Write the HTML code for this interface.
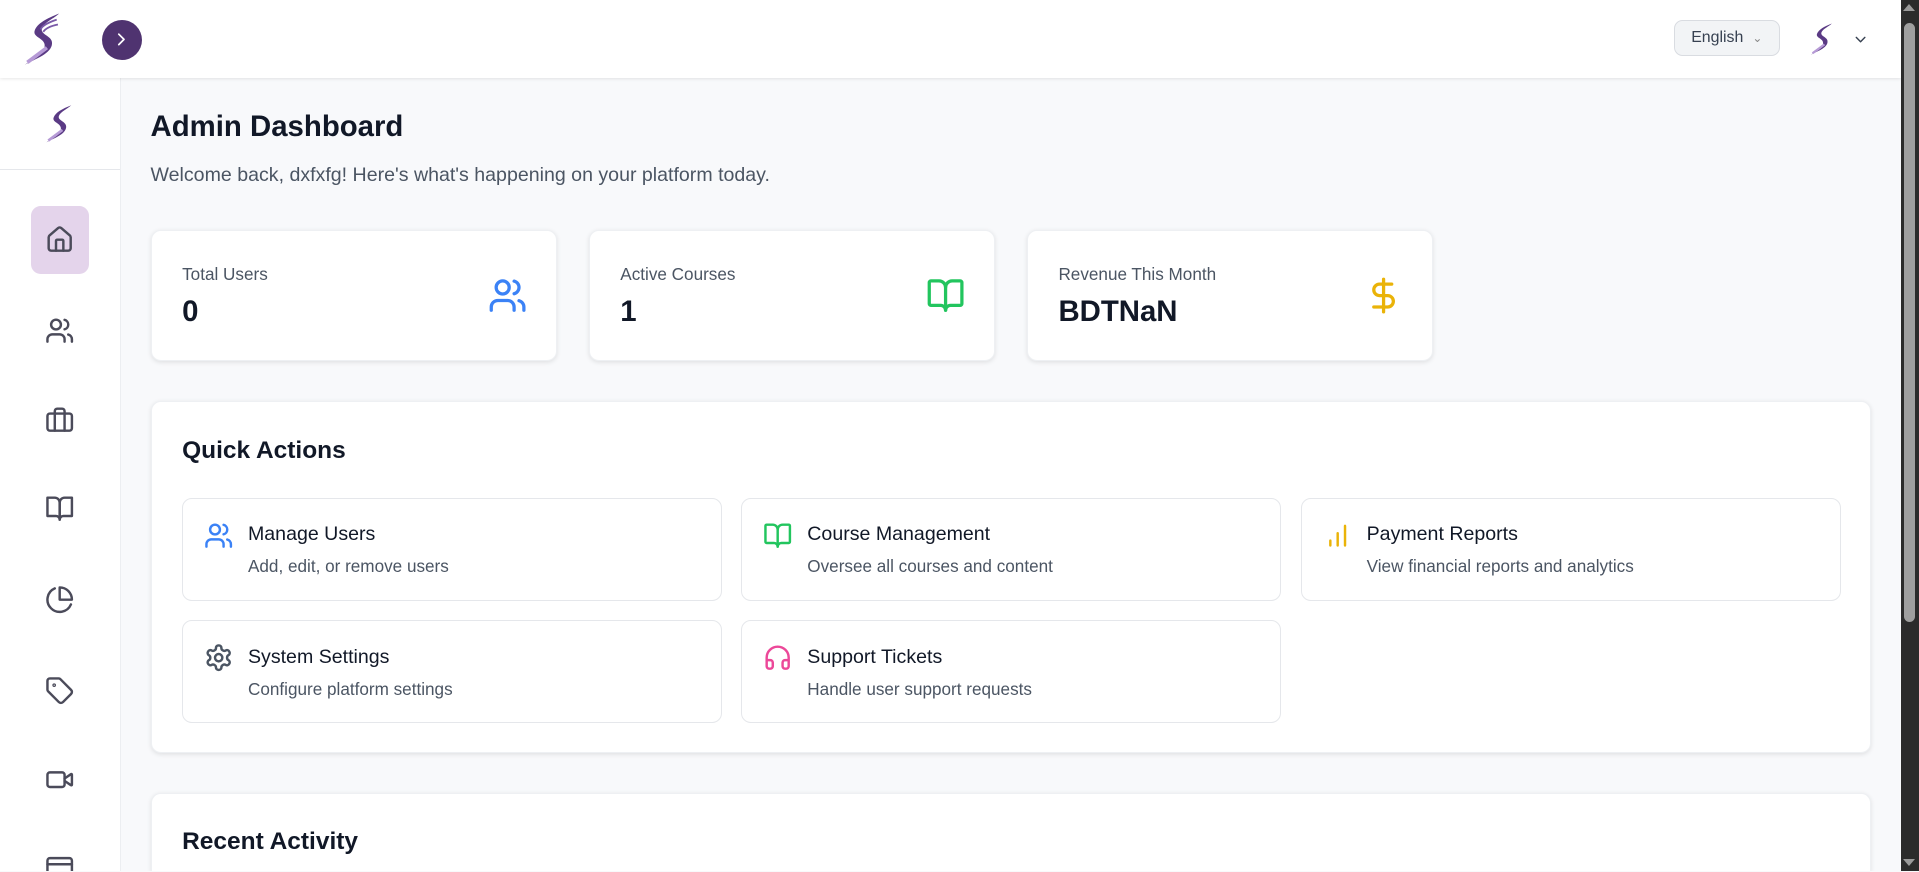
<!DOCTYPE html>
<html><head><meta charset="utf-8"><style>
html,body{margin:0;padding:0;width:1919px;height:872px;overflow:hidden;background:#f8f9fb;font-family:"Liberation Sans",sans-serif}
#w{zoom:1.2239;width:1568px;height:712px;position:relative;overflow:hidden;background:#f8f9fb}
.abs{position:absolute}
svg.i{fill:none;stroke-width:2;stroke-linecap:round;stroke-linejoin:round}
.hdr{left:0;top:0;width:1553px;height:64px;background:#fff;box-shadow:0 1px 3px rgba(0,0,0,.12);z-index:3}
.side{left:0;top:64px;width:98px;height:648px;background:#fff;border-right:1px solid #eceef1;z-index:2;overflow:hidden}
.card{background:#fff;border-radius:8px;box-shadow:0 1px 4px rgba(0,0,0,.1);border:1px solid #eef0f3;box-sizing:border-box}
.stat .l{position:absolute;left:25px;top:27px;font-size:14px;color:#4b5563}
.stat .v{position:absolute;left:25px;top:52px;font-size:24px;font-weight:bold;color:#111827}
.stat svg{position:absolute;left:275px;top:37px}
.qa{position:absolute;width:441px;height:84px;border:1px solid #e5e7eb;border-radius:8px;box-sizing:border-box;background:#fff}
.qa svg{position:absolute;left:17px;top:18px}
.qa .t{position:absolute;left:53px;top:20px;font-size:16px;color:#111827}
.qa .d{position:absolute;left:53px;top:47px;font-size:14px;color:#4b5563}
.nav{position:absolute;left:37px;stroke:#4b4b5a}
</style></head><body><div id="w">
<div class="abs hdr">
 <svg class="abs" style="left:16px;top:9px" width="36" height="46" viewBox="0 0 36 46"><path d="M32 2C22 6 14 10 12 16C10 22 22 22 20 30C18 38 8 40 4 44C10 40 24 36 26 28C28 20 16 20 18 14C20 9 28 6 32 2Z" fill="#5a3a84"/><path d="M30 7C24 9 18 12 17 15M31 11C26 12 21 14 19 17" stroke="#7a5aa8" stroke-width="1.5" fill="none"/><path d="M6 42L22 30" stroke="#b69ad6" stroke-width="3"/></svg>
 <div class="abs" style="left:83px;top:16px;width:33px;height:33px;border-radius:50%;background:#4f3370"></div>
 <svg class="abs i" style="left:91px;top:24px" width="17" height="17" viewBox="0 0 24 24" stroke="#fff"><path d="M9 6l6 6-6 6"/></svg>
 <div class="abs" style="left:1368px;top:16px;width:86px;height:30px;border:1px solid #d9dce1;border-radius:7px;background:#f2f4f6;box-sizing:border-box;font-size:13px;color:#374151;line-height:28px;padding-left:13px">English<span style="position:absolute;left:63px;top:0;color:#888;font-size:10px">&#8964;</span></div>
 <svg class="abs" style="left:1477px;top:18px" width="22" height="28" viewBox="0 0 36 46"><path d="M32 2C22 6 14 10 12 16C10 22 22 22 20 30C18 38 8 40 4 44C10 40 24 36 26 28C28 20 16 20 18 14C20 9 28 6 32 2Z" fill="#5a3a84"/><path d="M6 42L22 30" stroke="#b69ad6" stroke-width="3"/></svg>
 <svg class="abs i" style="left:1513px;top:25px" width="14" height="14" viewBox="0 0 24 24" stroke="#374151"><path d="M6 9l6 6 6-6"/></svg>
</div>
<div class="abs side">
 <svg class="abs" style="left:35px;top:20px" width="26" height="34" viewBox="0 0 36 46"><path d="M32 2C22 6 14 10 12 16C10 22 22 22 20 30C18 38 8 40 4 44C10 40 24 36 26 28C28 20 16 20 18 14C20 9 28 6 32 2Z" fill="#5a3a84"/><path d="M6 42L22 30" stroke="#b69ad6" stroke-width="3"/></svg>
 <div class="abs" style="left:0;top:74px;width:98px;height:1px;background:#e5e7eb"></div>
 <div class="abs" style="left:25px;top:104px;width:48px;height:56px;border-radius:8px;background:#e4d4eb"></div>
 <svg class="nav i" style="top:120px" width="24" height="24" viewBox="0 0 24 24" stroke="#4a3366"><path d="M15 21v-8a1 1 0 0 0-1-1h-4a1 1 0 0 0-1 1v8"/><path d="M3 10a2 2 0 0 1 .7-1.5l7-6a2 2 0 0 1 2.6 0l7 6A2 2 0 0 1 21 10v9a2 2 0 0 1-2 2H5a2 2 0 0 1-2-2z"/></svg>
 <svg class="nav i" style="top:194px" width="24" height="24" viewBox="0 0 24 24"><path d="M16 21v-2a4 4 0 0 0-4-4H6a4 4 0 0 0-4 4v2"/><circle cx="9" cy="7" r="4"/><path d="M22 21v-2a4 4 0 0 0-3-3.87M16 3.13a4 4 0 0 1 0 7.75"/></svg>
 <svg class="nav i" style="top:267px" width="24" height="24" viewBox="0 0 24 24"><rect x="2" y="7" width="20" height="14" rx="2"/><path d="M16 21V5a2 2 0 0 0-2-2h-4a2 2 0 0 0-2 2v16"/></svg>
 <svg class="nav i" style="top:340px" width="24" height="24" viewBox="0 0 24 24"><path d="M2 3h6a4 4 0 0 1 4 4v14a3 3 0 0 0-3-3H2z"/><path d="M22 3h-6a4 4 0 0 0-4 4v14a3 3 0 0 1 3-3h7z"/></svg>
 <svg class="nav i" style="top:414px" width="24" height="24" viewBox="0 0 24 24"><path d="M21.2 15.9A10 10 0 1 1 8 2.8"/><path d="M22 12A10 10 0 0 0 12 2v10z"/></svg>
 <svg class="nav i" style="top:488px" width="24" height="24" viewBox="0 0 24 24"><path d="M12.6 2.6A2 2 0 0 0 11.2 2H4a2 2 0 0 0-2 2v7.2a2 2 0 0 0 .6 1.4l8.7 8.7a2.4 2.4 0 0 0 3.4 0l6.6-6.6a2.4 2.4 0 0 0 0-3.4z"/><circle cx="7.5" cy="7.5" r=".5"/></svg>
 <svg class="nav i" style="top:561px" width="24" height="24" viewBox="0 0 24 24"><path d="M16 13l5.2 3.5a.5.5 0 0 0 .8-.4V7.9a.5.5 0 0 0-.8-.4L16 11"/><rect x="2" y="6" width="14" height="12" rx="2"/></svg>
 <svg class="nav i" style="top:632px" width="24" height="24" viewBox="0 0 24 24"><rect x="2" y="5" width="20" height="14" rx="2"/><path d="M2 10h20"/></svg>
</div>
<div class="abs" style="left:123px;top:90px;font-size:24px;font-weight:bold;color:#111827">Admin Dashboard</div>
<div class="abs" style="left:123px;top:134px;font-size:16px;color:#4b5563">Welcome back, dxfxfg! Here's what's happening on your platform today.</div>
<div class="abs card stat" style="left:123px;top:188px;width:332px;height:107px"><div class="l">Total Users</div><div class="v">0</div><svg class="i" width="32" height="32" viewBox="0 0 24 24" stroke="#3b82f6"><path d="M16 21v-2a4 4 0 0 0-4-4H6a4 4 0 0 0-4 4v2"/><circle cx="9" cy="7" r="4"/><path d="M22 21v-2a4 4 0 0 0-3-3.87M16 3.13a4 4 0 0 1 0 7.75"/></svg></div>
<div class="abs card stat" style="left:481px;top:188px;width:332px;height:107px"><div class="l">Active Courses</div><div class="v">1</div><svg class="i" width="32" height="32" viewBox="0 0 24 24" stroke="#22c55e"><path d="M12 7v14"/><path d="M3 18a1 1 0 0 1-1-1V4a1 1 0 0 1 1-1h5a4 4 0 0 1 4 4 4 4 0 0 1 4-4h5a1 1 0 0 1 1 1v13a1 1 0 0 1-1 1h-6a3 3 0 0 0-3 3 3 3 0 0 0-3-3z"/></svg></div>
<div class="abs card stat" style="left:839px;top:188px;width:332px;height:107px"><div class="l">Revenue This Month</div><div class="v">BDTNaN</div><svg class="i" width="32" height="32" viewBox="0 0 24 24" stroke="#eab308"><path d="M12 2v20M17 5H9.5a3.5 3.5 0 0 0 0 7h5a3.5 3.5 0 0 1 0 7H6"/></svg></div>
<div class="abs card" style="left:123px;top:328px;width:1406px;height:287px">
 <div class="abs" style="left:25px;top:28px;font-size:20px;font-weight:bold;color:#111827">Quick Actions</div>
 <div class="qa" style="left:25px;top:78px"><svg class="i" width="24" height="24" viewBox="0 0 24 24" stroke="#3b82f6"><path d="M16 21v-2a4 4 0 0 0-4-4H6a4 4 0 0 0-4 4v2"/><circle cx="9" cy="7" r="4"/><path d="M22 21v-2a4 4 0 0 0-3-3.87M16 3.13a4 4 0 0 1 0 7.75"/></svg><div class="t">Manage Users</div><div class="d">Add, edit, or remove users</div></div>
 <div class="qa" style="left:482px;top:78px"><svg class="i" width="24" height="24" viewBox="0 0 24 24" stroke="#22c55e"><path d="M12 7v14"/><path d="M3 18a1 1 0 0 1-1-1V4a1 1 0 0 1 1-1h5a4 4 0 0 1 4 4 4 4 0 0 1 4-4h5a1 1 0 0 1 1 1v13a1 1 0 0 1-1 1h-6a3 3 0 0 0-3 3 3 3 0 0 0-3-3z"/></svg><div class="t">Course Management</div><div class="d">Oversee all courses and content</div></div>
 <div class="qa" style="left:939px;top:78px"><svg class="i" width="24" height="24" viewBox="0 0 24 24" stroke="#eab308"><path d="M12 20V10M18 20V4M6 20v-4"/></svg><div class="t">Payment Reports</div><div class="d">View financial reports and analytics</div></div>
 <div class="qa" style="left:25px;top:178px"><svg class="i" width="24" height="24" viewBox="0 0 24 24" stroke="#4b5563"><path d="M12.22 2h-.44a2 2 0 0 0-2 2v.18a2 2 0 0 1-1 1.73l-.43.25a2 2 0 0 1-2 0l-.15-.08a2 2 0 0 0-2.730.73l-.22.38a2 2 0 0 0 .73 2.73l.15.1a2 2 0 0 1 1 1.72v.51a2 2 0 0 1-1 1.74l-.15.09a2 2 0 0 0-.73 2.73l.22.38a2 2 0 0 0 2.73.73l.15-.08a2 2 0 0 1 2 0l.43.25a2 2 0 0 1 1 1.73V20a2 2 0 0 0 2 2h.44a2 2 0 0 0 2-2v-.18a2 2 0 0 1 1-1.73l.43-.25a2 2 0 0 1 2 0l.15.08a2 2 0 0 0 2.73-.73l.22-.39a2 2 0 0 0-.73-2.73l-.15-.08a2 2 0 0 1-1-1.74v-.5a2 2 0 0 1 1-1.74l.15-.09a2 2 0 0 0 .73-2.73l-.22-.38a2 2 0 0 0-2.73-.73l-.15.08a2 2 0 0 1-2 0l-.43-.25a2 2 0 0 1-1-1.73V4a2 2 0 0 0-2-2z"/><circle cx="12" cy="12" r="3"/></svg><div class="t">System Settings</div><div class="d">Configure platform settings</div></div>
 <div class="qa" style="left:482px;top:178px"><svg class="i" width="24" height="24" viewBox="0 0 24 24" stroke="#ec4899"><path d="M3 14h3a2 2 0 0 1 2 2v3a2 2 0 0 1-2 2H5a2 2 0 0 1-2-2v-7a9 9 0 0 1 18 0v7a2 2 0 0 1-2 2h-1a2 2 0 0 1-2-2v-3a2 2 0 0 1 2-2h3"/></svg><div class="t">Support Tickets</div><div class="d">Handle user support requests</div></div>
</div>
<div class="abs card" style="left:123px;top:648px;width:1406px;height:64px;border-bottom:none;border-radius:8px 8px 0 0">
 <div class="abs" style="left:25px;top:28px;font-size:20px;font-weight:bold;color:#111827">Recent Activity</div>
</div>
<div class="abs" style="left:1553px;top:0;width:15px;height:712px;background:#2b2b2b;z-index:5">
 <div class="abs" style="left:2px;top:3px;width:0;height:0;border-left:5px solid transparent;border-right:5px solid transparent;border-bottom:6px solid #9a9a9a"></div>
 <div class="abs" style="left:3px;top:19px;width:9px;height:489px;border-radius:5px;background:#9f9f9f"></div>
 <div class="abs" style="left:2px;top:702px;width:0;height:0;border-left:5px solid transparent;border-right:5px solid transparent;border-top:6px solid #9a9a9a"></div>
</div>
</div></body></html>
